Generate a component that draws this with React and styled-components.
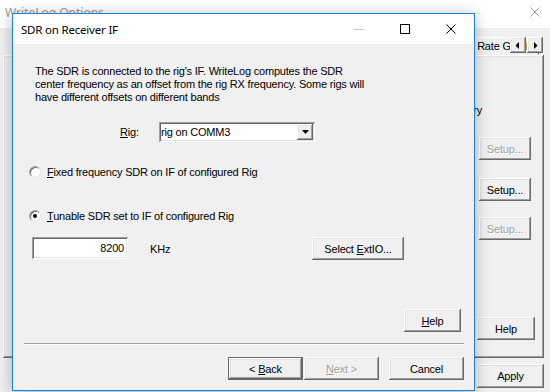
import React from "react";
import styled, { createGlobalStyle, css } from "styled-components";

const GlobalStyle = createGlobalStyle`
  html, body { margin: 0; padding: 0; }
  body {
    background: #f0f0f0;
    font-family: "Liberation Sans", Arial, sans-serif;
    font-size: 11px;
    letter-spacing: -0.2px;
    color: #000;
  }
`;

const raised = css`
  box-shadow: inset -1px -1px #696969, inset 1px 1px #fff,
    inset -2px -2px #a0a0a0, inset 2px 2px #e3e3e3;
`;

const sunken = css`
  box-shadow: inset 1px 1px #a0a0a0, inset -1px -1px #fff,
    inset 2px 2px #696969, inset -2px -2px #e3e3e3;
`;

const Desktop = styled.div`
  position: relative;
  width: 550px;
  height: 392px;
  overflow: hidden;
`;

/* ---------- background window ---------- */

const OptionsWindow = styled.div`
  display: flex;
  flex-direction: column;
  height: 100%;
  background: #f0f0f0;
`;

const OptionsTitle = styled.div`
  height: 28px;
  box-sizing: border-box;
  padding: 0 10px 4px 5px;
  display: flex;
  align-items: center;
  justify-content: space-between;
  background: #fff;
  color: #9a9a9a;
  font-family: "Noto Sans", sans-serif;
  font-size: 12px;
  letter-spacing: 0;
`;

const TabStrip = styled.div`
  position: relative;
  height: 27px;
  display: flex;
  align-items: flex-end;
  justify-content: flex-end;
  padding-right: 11px;
  overflow: hidden;
`;

const Tab = styled.div`
  height: 18px;
  line-height: 17px;
  padding: 0 6px;
  box-sizing: border-box;
  border: 1px solid;
  border-color: #fff #696969 transparent #fff;
  white-space: nowrap;
`;

const TabScroller = styled.div`
  position: absolute;
  right: 7px;
  top: 9px;
  display: flex;
  gap: 1px;
`;

const ScrollButton = styled.div`
  width: 16px;
  height: 16px;
  display: flex;
  align-items: center;
  justify-content: center;
  background: #f0f0f0;
  ${raised};
`;

const TabPanel = styled.div`
  height: 303px;
  margin: 0 6px 0 3px;
  padding: 2px;
  box-sizing: border-box;
  display: flex;
  justify-content: flex-end;
  ${raised};
`;

const SideColumn = styled.div`
  display: flex;
  flex-direction: column;
  align-items: flex-end;
`;

const SideLabel = styled.div`
  width: 12px;
  display: flex;
  justify-content: flex-end;
  white-space: nowrap;
  line-height: 13px;
  margin: 47px 60px 0 0;
`;

const OptionsFooter = styled.div`
  display: flex;
  justify-content: flex-end;
  padding: 6px 6px 0 0;
`;

/* ---------- dialog ---------- */

const Dialog = styled.div`
  position: absolute;
  left: 12px;
  top: 13px;
  width: 463px;
  height: 378px;
  box-sizing: border-box;
  border: 1px solid #1883d7;
  background: #f0f0f0;
  display: flex;
  flex-direction: column;
  box-shadow: 0 2px 14px rgba(0, 0, 0, 0.28);
`;

const TitleBar = styled.div`
  height: 30px;
  flex: none;
  display: flex;
  align-items: center;
  background: #fff;
`;

const TitleText = styled.div`
  flex: 1;
  padding-left: 8px;
  font-family: "Noto Sans", sans-serif;
  font-size: 11.5px;
  letter-spacing: -0.2px;
`;

const CaptionButton = styled.div`
  width: 46px;
  height: 30px;
  display: flex;
  align-items: center;
  justify-content: center;
`;

const Body = styled.div`
  flex: 1;
  display: flex;
  flex-direction: column;
`;

const Description = styled.p`
  margin: 21px 0 0;
  padding-left: 22px;
  line-height: 13px;
`;

const RigRow = styled.div`
  margin-top: 18px;
  padding-left: 107px;
  display: flex;
  align-items: center;
  height: 20px;
`;

const RigLabel = styled.label`
  width: 39px;
`;

const Combo = styled.div`
  width: 156px;
  height: 20px;
  box-sizing: border-box;
  padding: 2px;
  background: #fff;
  display: flex;
  align-items: center;
  ${sunken};
`;

const ComboText = styled.span`
  flex: 1;
`;

const ComboArrow = styled.div`
  width: 16px;
  height: 16px;
  display: flex;
  align-items: center;
  justify-content: center;
  background: #f0f0f0;
  ${raised};
`;

const RadioRow = styled.label`
  display: flex;
  align-items: center;
  gap: 6px;
  height: 13px;
  padding-left: 16px;
  margin-top: ${(p) => p.$top}px;
`;

const RadioCircle = styled.span`
  width: 12px;
  height: 12px;
  box-sizing: border-box;
  border-radius: 50%;
  background: #fff;
  border: 1px solid;
  border-color: #a0a0a0 #e3e3e3 #e3e3e3 #a0a0a0;
  box-shadow: inset 1px 1px #696969;
  display: flex;
  align-items: center;
  justify-content: center;

  &::after {
    content: "";
    width: 4px;
    height: 4px;
    border-radius: 50%;
    background: ${(p) => (p.$checked ? "#000" : "transparent")};
  }
`;

const IfRow = styled.div`
  margin-top: 15px;
  padding: 0 70px 0 19px;
  display: flex;
  align-items: center;
  height: 23px;
`;

const Edit = styled.div`
  width: 96px;
  height: 22px;
  box-sizing: border-box;
  padding: 0 4px;
  background: #fff;
  display: flex;
  align-items: center;
  justify-content: flex-end;
  align-self: flex-start;
  ${sunken};
`;

const Unit = styled.span`
  margin-left: 22px;
  flex: 1;
`;

const HelpRow = styled.div`
  margin-top: 49px;
  padding-right: 13px;
  display: flex;
  justify-content: flex-end;
`;

const Separator = styled.hr`
  margin: 11px 10px 0 11px;
  height: 0;
  border: 0;
  border-top: 1px solid #a0a0a0;
  border-bottom: 1px solid #fff;
`;

const WizardButtons = styled.div`
  margin-top: 12px;
  padding-right: 10px;
  display: flex;
  justify-content: flex-end;
`;

const Button = styled.div`
  width: ${(p) => p.$w}px;
  height: ${(p) => p.$h || 23}px;
  box-sizing: border-box;
  margin-top: ${(p) => p.$top || 0}px;
  margin-left: ${(p) => p.$left || 0}px;
  margin-right: ${(p) => p.$right || 0}px;
  display: flex;
  align-items: center;
  justify-content: center;
  background: #f0f0f0;
  white-space: pre;
  color: ${(p) => (p.$disabled ? "#a0a0a0" : "#000")};
  text-shadow: ${(p) => (p.$disabled ? "1px 1px #fff" : "none")};
  ${raised};
  ${(p) =>
    p.$default &&
    css`
      border: 1px solid #696969;
    `}
`;

const Key = styled.span`
  text-decoration: underline;
`;

const CloseIcon = ({ color = "#000" }) => (
  <svg width="10" height="10" viewBox="0 0 10 10">
    <path d="M0.5 0.5 L9.5 9.5 M9.5 0.5 L0.5 9.5" stroke={color} strokeWidth="1" />
  </svg>
);

const Arrow = ({ dir }) => (
  <svg width="6" height="7" viewBox="0 0 6 7">
    {dir === "left" ? (
      <polygon points="4,0 4,7 0.5,3.5" fill="#000" />
    ) : (
      <polygon points="2,0 2,7 5.5,3.5" fill="#000" />
    )}
  </svg>
);

export default function App() {
  return (
    <Desktop>
      <GlobalStyle />
      <OptionsWindow>
        <OptionsTitle>
          <span>WriteLog Options</span>
          <CloseIcon color="#a0a0a0" />
        </OptionsTitle>
        <TabStrip>
          <Tab>Rate Graph</Tab>
          <TabScroller>
            <ScrollButton>
              <Arrow dir="left" />
            </ScrollButton>
            <ScrollButton>
              <Arrow dir="right" />
            </ScrollButton>
          </TabScroller>
        </TabStrip>
        <TabPanel>
          <SideColumn>
            <SideLabel>Secondary</SideLabel>
            <Button $w={52} $top={20} $right={11} $disabled>Setup...</Button>
            <Button $w={52} $top={18} $right={11}>Setup...</Button>
            <Button $w={52} $top={16} $right={11} $disabled>Setup...</Button>
            <Button $w={58} $top={77} $right={7}>Help</Button>
          </SideColumn>
        </TabPanel>
        <OptionsFooter>
          <Button $w={67} $h={24}>Apply</Button>
        </OptionsFooter>
      </OptionsWindow>

      <Dialog>
        <TitleBar>
          <TitleText>SDR on Receiver IF</TitleText>
          <CaptionButton>
            <svg width="10" height="10" viewBox="0 0 10 10">
              <path d="M0 5.5 H10" stroke="#c4c4c4" strokeWidth="1" />
            </svg>
          </CaptionButton>
          <CaptionButton>
            <svg width="10" height="10" viewBox="0 0 10 10">
              <rect x="0.5" y="0.5" width="9" height="9" fill="none" stroke="#000" />
            </svg>
          </CaptionButton>
          <CaptionButton>
            <CloseIcon />
          </CaptionButton>
        </TitleBar>
        <Body>
          <Description>
            The SDR is connected to the rig's IF. WriteLog computes the SDR
            <br />
            center frequency as an offset from the rig RX frequency. Some rigs will
            <br />
            have different offsets on different bands
          </Description>
          <RigRow>
            <RigLabel>
              <Key>R</Key>ig:
            </RigLabel>
            <Combo>
              <ComboText>rig on COMM3</ComboText>
              <ComboArrow>
                <svg width="7" height="4" viewBox="0 0 7 4">
                  <polygon points="0,0 7,0 3.5,4" fill="#000" />
                </svg>
              </ComboArrow>
            </Combo>
          </RigRow>
          <RadioRow $top={23}>
            <RadioCircle />
            <span>
              <Key>F</Key>ixed frequency SDR on IF of configured Rig
            </span>
          </RadioRow>
          <RadioRow $top={31}>
            <RadioCircle $checked />
            <span>
              <Key>T</Key>unable SDR set to IF of configured Rig
            </span>
          </RadioRow>
          <IfRow>
            <Edit>8200</Edit>
            <Unit>KHz</Unit>
            <Button $w={92}>
              {"Select "}<Key>E</Key>xtIO...
            </Button>
          </IfRow>
          <HelpRow>
            <Button $w={57}>
              <Key>H</Key>elp
            </Button>
          </HelpRow>
          <Separator />
          <WizardButtons>
            <Button $w={75} $default>
              {"< "}<Key>B</Key>ack
            </Button>
            <Button $w={75} $left={1} $disabled>
              <Key>N</Key>{"ext >"}
            </Button>
            <Button $w={75} $left={10}>Cancel</Button>
          </WizardButtons>
        </Body>
      </Dialog>
    </Desktop>
  );
}
